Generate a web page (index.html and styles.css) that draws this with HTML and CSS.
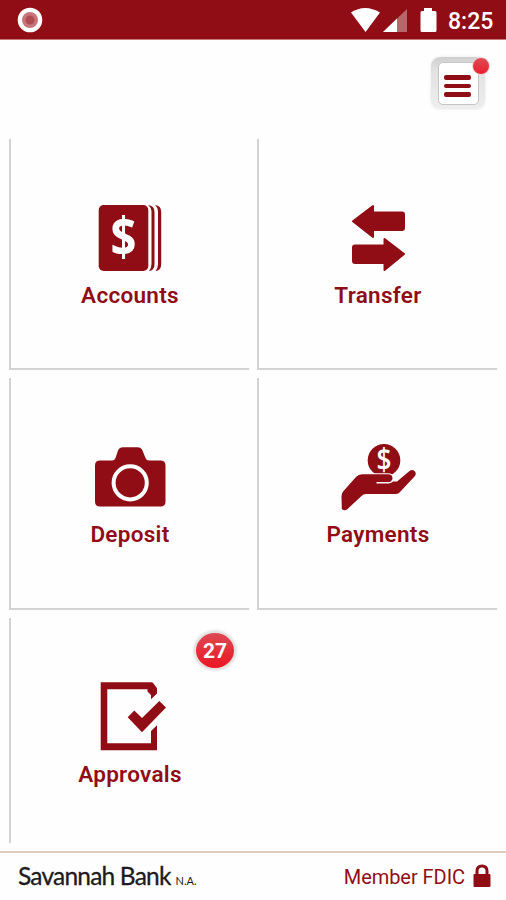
FILE: index.html
```
<!DOCTYPE html>
<html lang="en">
<head>
    <meta charset="UTF-8">
    <meta name="viewport" content="width=device-width, initial-scale=1.0">
    <link rel="stylesheet" href="styles.css">
    <title>Savannah Bank</title>
</head>
<body>
    <div class="status-bar">
        <svg class="record" width="26" height="26" viewBox="0 0 26 26">
            <circle cx="13" cy="13" r="12.300" fill="#fff"/>
            <circle cx="13" cy="13" r="8" fill="#c8747a"/>
            <circle cx="13" cy="13" r="4.500" fill="#b14b50"/>
        </svg>
        <svg width="88" height="28" viewBox="0 0 88 28">
            <path d="M1 6.500 Q15 -2.500 30 6.500 L15.500 26 Z" fill="#fff"/>
            <path d="M33 26 L57 3 V26 Z" fill="#b9666a"/>
            <path d="M33 26 L47 12.600 V26 Z" fill="#fff"/>
            <path d="M74 2 h8 v3 h3 q1.500 0 1.500 1.500 V24.500 q0 1.500 -1.500 1.500 H72 q-1.500 0 -1.500 -1.500 V6.500 q0 -1.500 1.500 -1.500 h2 Z" fill="#fff"/>
        </svg>
        <span class="clock">8:25</span>
    </div>

    <div class="toolbar">
        <div class="menu-button">
            <div class="menu-inner">
                <span class="line"></span>
                <span class="line"></span>
                <span class="line"></span>
            </div>
            <span class="dot"></span>
        </div>
    </div>

    <div class="tiles">
        <div class="tile">
            <svg class="icon" width="80" height="72" viewBox="0 0 80 72">
                <rect x="8.700" y="4" width="49.600" height="66" rx="5"/>
                <path d="M58 4 Q64.500 4.500 64.500 11 V63 Q64.500 69.500 59 70 Q61.500 67.500 61.500 63 V11 Q61.500 6.500 58 4 Z"/>
                <path d="M65 4 Q71.200 4.500 71.200 11 V63 Q71.200 69.500 65.500 70 Q68 67.500 68 63 V11 Q68 6.500 65 4 Z"/>
                <text class="dollar" x="20.500" y="55" textLength="26" lengthAdjust="spacingAndGlyphs">$</text>
            </svg>
            <span class="label">Accounts</span>
        </div>
        <div class="tile">
            <svg class="icon rounded" width="80" height="72" viewBox="0 0 80 72">
                <path d="M15 20.300 L35 5 V11.500 H64 Q66 11.500 66 13.500 V27 Q66 29 64 29 H35 V36 Z"/>
                <path d="M66 53 L46.500 38 V44.500 H17 Q15 44.500 15 46.500 V60 Q15 62 17 62 H46.500 V69 Z"/>
            </svg>
            <span class="label">Transfer</span>
        </div>
        <div class="tile">
            <svg class="icon" width="80" height="72" viewBox="0 0 80 72">
                <path d="M10 20.500 H22 Q24.500 20.500 25.500 18 L28 10.500 Q29.500 7.200 33 7.200 H47.500 Q51 7.200 52.500 10.500 L55.500 18 Q56.500 20.500 59 20.500 H70.500 Q75.500 20.500 75.500 25.500 V61.500 Q75.500 66.500 70.500 66.500 H10 Q5 66.500 5 61.500 V25.500 Q5 20.500 10 20.500 Z"/>
                <circle class="ring" cx="40.200" cy="42.800" r="16.600"/>
            </svg>
            <span class="label">Deposit</span>
        </div>
        <div class="tile">
            <svg class="icon" width="80" height="72" viewBox="0 0 80 72">
                <circle cx="46" cy="20.300" r="16.300"/>
                <text class="dollar small" x="38.500" y="29.500" textLength="15" lengthAdjust="spacingAndGlyphs">$</text>
                <path class="gap" d="M3.500 56 Q3.500 53 5.500 51 L18 37 Q20.500 34.300 24 34.300 H50 Q54.500 34.300 54.500 38.500 Q54.500 41.500 51 41.500 H59 L71.500 31 Q74 29 76.500 31 Q79 33.500 76.500 36.500 L62 52 Q60.500 54 58 54 H28 Q25.500 54 23.500 56 L9.500 69 Q6.500 71.500 3.800 69 Z"/>
                <path class="thumb" d="M38.500 42.800 H50.500 Q54.500 42.500 55 39.500"/>
            </svg>
            <span class="label">Payments</span>
        </div>
        <div class="tile last">
            <svg class="icon" width="80" height="72" viewBox="0 0 80 72">
                <path d="M10.700 2.300 H61 Q62.500 2.300 63.500 3.500 L67 8.300 V13.500 L61 19.300 V15 L57.500 11.500 V9.300 H17.300 V63.300 H61 V51 L67 45.300 V70.300 H10.700 Z"/>
                <path d="M37.700 37.300 L44.300 30.500 L52 38 L69.300 21 L76 27.500 L52 52.300 Z"/>
            </svg>
            <span class="label">Approvals</span>
            <span class="badge">27</span>
        </div>
    </div>

    <div class="footer">
        <div class="brand">
            <span class="bank">Savannah Bank</span>
            <span class="na">N.A.</span>
        </div>
        <div class="fdic">
            <span>Member FDIC</span>
            <svg class="lock" width="18" height="24" viewBox="0 0 18 24">
                <path d="M4 11 V7 Q4 2 9 2 Q14 2 14 7 V11" fill="none" stroke="#910d16" stroke-width="3"/>
                <rect x="0.500" y="10" width="17" height="13" rx="1" fill="#910d16"/>
            </svg>
        </div>
    </div>
</body>
</html>
```
FILE: styles.css
```
html, body {
    margin: 0;
    padding: 0;
}
body {
    height: 900px;
    display: flex;
    flex-direction: column;
    overflow: hidden;
    font-family: Roboto, sans-serif;
    color: #910d16;
    background-color: #fefefe;
}
.status-bar {
    display: flex;
    align-items: center;
    height: 39px;
    padding: 0 12px 0 17px;
    border-bottom: 1px solid #c5797d;
    background-color: #910d16;
}
.record {
    margin-right: auto;
}
.clock {
    width: 46px;
    margin-left: 10px;
    padding-top: 3px;
    color: #fff;
    font-size: 23px;
    font-weight: 500;
}
.toolbar {
    display: flex;
    justify-content: flex-end;
    height: 82px;
    padding: 17px 21px 0 0;
}
.menu-button {
    position: relative;
    box-sizing: border-box;
    width: 54px;
    height: 52px;
    padding: 5px 7px 3px;
    border-radius: 9px;
    background: linear-gradient(#cfcfcf, #e2e2e2 25%, #eeeeee);
    box-shadow: 0 0 3px #e4e4e4;
}
.menu-inner {
    display: flex;
    flex-direction: column;
    justify-content: center;
    align-items: center;
    gap: 4px;
    box-sizing: border-box;
    width: 41px;
    height: 43px;
    padding: 5px 2px 0 0;
    border: 1px solid #c4c4c4;
    border-radius: 5px;
    background-color: #fff;
}
.line {
    width: 27px;
    height: 4.500px;
    border-radius: 2px;
    background-color: #910d16;
}
.dot {
    position: absolute;
    top: 0;
    right: -5px;
    width: 16px;
    height: 16px;
    border: 1px solid #f3d5d7;
    border-radius: 50%;
    background: linear-gradient(#e04b55, #e8202e);
}
.tiles {
    display: grid;
    grid-template-columns: 240px 240px;
    grid-template-rows: 231px 232px 225px;
    gap: 8px;
    padding-left: 9px;
}
.tile {
    position: relative;
    display: flex;
    flex-direction: column;
    align-items: center;
    box-sizing: border-box;
    padding-top: 62px;
    border-left: 2px solid #d3d3d3;
    border-bottom: 2px solid #d3d3d3;
}
.tile.last {
    border-bottom: none;
}
.icon {
    fill: #910d16;
    overflow: visible;
}
.rounded path {
    stroke: #910d16;
    stroke-width: 2;
    stroke-linejoin: round;
}
.dollar {
    fill: #fff;
    font-family: "Open Sans", sans-serif;
    font-size: 54px;
    font-weight: 700;
}
.dollar.small {
    font-size: 30px;
    font-weight: 600;
}
.ring {
    fill: none;
    stroke: #fff;
    stroke-width: 4;
}
.gap {
    stroke: #fefefe;
    stroke-width: 2;
    paint-order: stroke;
}
.thumb {
    fill: none;
    stroke: #fefefe;
    stroke-width: 1.500;
}
.label {
    margin-top: 8px;
    font-size: 22.500px;
    line-height: 28px;
    font-weight: 600;
    letter-spacing: 0.300px;
}
.badge {
    position: absolute;
    top: 13px;
    left: 183px;
    width: 38px;
    height: 35px;
    border: 2px solid #e6e0e0;
    border-radius: 50%;
    box-shadow: 0 0 3px #cccccc;
    background: linear-gradient(#dc4a54, #ec1522);
    color: #fff;
    font-size: 21px;
    font-weight: 700;
    line-height: 36px;
    text-align: center;
}
.footer {
    display: flex;
    justify-content: space-between;
    align-items: center;
    box-sizing: border-box;
    height: 49px;
    margin-top: auto;
    padding: 0 15px 0 18px;
    border-top: 2px solid #dccdbd;
}
.brand {
    display: flex;
    align-items: baseline;
    gap: 5px;
    padding-bottom: 2px;
    color: #1c1c1c;
    font-family: Lato, sans-serif;
    white-space: nowrap;
}
.bank {
    font-size: 24.500px;
    letter-spacing: -0.800px;
    -webkit-text-stroke: 0.300px #1c1c1c;
}
.na {
    font-size: 11px;
}
.fdic {
    display: flex;
    align-items: center;
    gap: 8px;
    font-size: 20px;
}
.fdic span {
    letter-spacing: -0.050px;
}
.lock {
    margin-bottom: 2px;
}
```
